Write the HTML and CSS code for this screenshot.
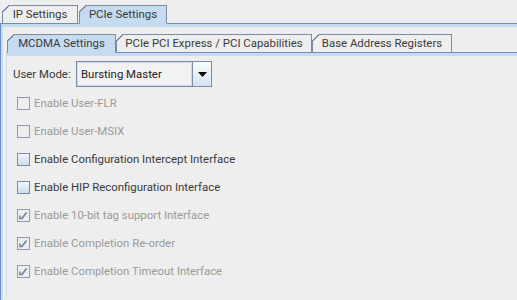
FILE: index.html
```html
<!DOCTYPE html>
<html lang="en">
<head>
    <meta charset="UTF-8">
    <title>PCIe Settings</title>
    <link rel="stylesheet" href="styles.css">
</head>
<body>
    <!-- Outer tabs -->
    <div class="tab-strip outer-strip">
        <div class="tab tab-ip">IP Settings</div>
        <div class="tab tab-pcie selected">PCIe Settings</div>
    </div>

    <div class="panel outer-panel">
        <!-- Inner tabs -->
        <div class="tab-strip inner-strip">
            <div class="tab tab-mcdma selected">MCDMA Settings</div>
            <div class="tab tab-caps">PCIe PCI Express / PCI Capabilities</div>
            <div class="tab tab-bar">Base Address Registers</div>
        </div>

        <div class="panel inner-panel">
            <div class="mode-row">
                <span class="mode-label">User Mode:</span>
                <div class="combo">
                    <div class="combo-value">Bursting Master</div>
                    <div class="combo-btn">
                        <svg width="9" height="5" viewBox="0 0 9 5"><path d="M0 0h9L4.5 5z" fill="#000"/></svg>
                    </div>
                </div>
            </div>

            <div class="options">
                <div class="option disabled"><span class="box"></span>Enable User-FLR</div>
                <div class="option disabled"><span class="box"></span>Enable User-MSIX</div>
                <div class="option"><span class="box"></span>Enable Configuration Intercept Interface</div>
                <div class="option"><span class="box"></span>Enable HIP Reconfiguration Interface</div>
                <div class="option disabled checked"><span class="box"><svg width="11" height="11" viewBox="0 0 11 11"><path d="M2 5.5v3h2l4.5-6" fill="none" stroke="#6f829b" stroke-width="1.6"/></svg></span>Enable 10-bit tag support Interface</div>
                <div class="option disabled checked"><span class="box"><svg width="11" height="11" viewBox="0 0 11 11"><path d="M2 5.5v3h2l4.5-6" fill="none" stroke="#6f829b" stroke-width="1.6"/></svg></span>Enable Completion Re-order</div>
                <div class="option disabled checked"><span class="box"><svg width="11" height="11" viewBox="0 0 11 11"><path d="M2 5.5v3h2l4.5-6" fill="none" stroke="#6f829b" stroke-width="1.6"/></svg></span>Enable Completion Timeout Interface</div>
            </div>
        </div>
    </div>
</body>
</html>
```

FILE: styles.css
```css
/* General */
* {
    margin: 0;
    padding: 0;
    box-sizing: border-box;
}

body {
    font-family: Roboto, "Liberation Sans", sans-serif;
    font-size: 11.4px;
    color: #3a3a3a;
    background-color: #eeeeee;
    overflow: hidden;
}

/* Tabs */
.tab-strip {
    display: flex;
    align-items: flex-end;
}

.outer-strip {
    padding: 5px 0 0 2px;
}

.inner-strip {
    padding-left: 1px;
}

.tab {
    position: relative;
    height: 19px;
    margin-bottom: -1px;
    border: 1px solid #7a8ba3;
    border-bottom-color: #6c8ebf;
    line-height: 17px;
    text-align: center;
    white-space: nowrap;
    background-color: #eeeeee;
}

.tab-ip    { width: 76px; margin-right: 1px; }
.tab-pcie  { width: 88px; }
.tab-mcdma { width: 109px; }
.tab-caps  { width: 196px; }
.tab-bar   { width: 140px; }

/* slanted top-left corner */
.tab::before {
    content: "";
    position: absolute;
    top: -1px;
    left: -1px;
    width: 7px;
    height: 7px;
    background: linear-gradient(135deg, #eeeeee 0 48%, #7a8ba3 48% 62%, transparent 62%);
}

.tab.selected {
    background-color: #c6dbf0;
    border-bottom-color: #c6dbf0;
    z-index: 1;
}

.tab.selected::before {
    background: linear-gradient(135deg, #eeeeee 0 48%, #7a8ba3 48% 62%, #c6dbf0 62%);
}

/* Panels */
.panel {
    border-top: 1px solid #6c8ebf;
    border-left: 1px solid #6c8ebf;
    box-shadow: inset 2px 3px 0 #c6dbf0;
}

.outer-panel {
    height: 277px;
    padding: 10px 0 0 5px;
}

.inner-panel {
    height: 246px;
    padding: 8px 0 0 6px;
    border-left-color: #d4dbe4;
    box-shadow: inset 0 3px 0 #c6dbf0;
}

/* User mode row */
.mode-row {
    display: flex;
    align-items: center;
}

.mode-label {
    width: 63px;
    white-space: nowrap;
}

.combo {
    display: flex;
    width: 136px;
    height: 26px;
    border: 1px solid #7a8ba3;
}

.combo-value {
    flex: 1;
    padding-left: 3px;
    line-height: 22px;
    background-color: #f2f2f2;
    border: 1px solid #c6dbf0;
    color: #222;
}

.combo-btn {
    width: 19px;
    display: flex;
    align-items: center;
    justify-content: center;
    border-left: 1px solid #7a8ba3;
    background: linear-gradient(#fafcfe, #d4e2f0);
}

/* Checkbox options */
.options {
    margin-top: 2px;
}

.option {
    display: flex;
    align-items: center;
    height: 28px;
    padding-left: 4px;
}

.option .box {
    width: 13px;
    height: 13px;
    margin-right: 4px;
    border: 1px solid #7a8ba3;
    background: linear-gradient(#f4f8fc, #cddcec);
    display: flex;
    align-items: center;
    justify-content: center;
}

.option.disabled {
    color: #9a9a9a;
}

.option.disabled .box {
    border-color: #8c9db3;
    background: transparent;
}
```
